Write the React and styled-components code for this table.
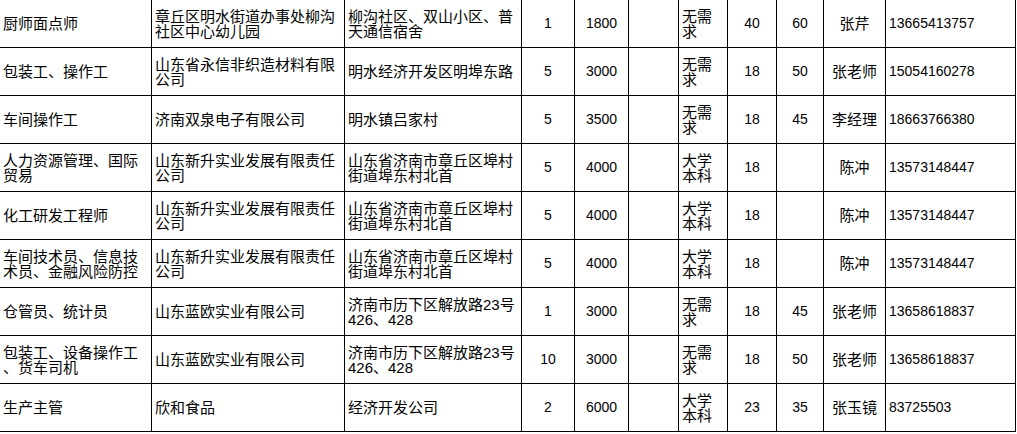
import React from 'react';
import styled, { createGlobalStyle } from 'styled-components';

const GlobalStyle = createGlobalStyle`
  html, body {
    margin: 0;
    padding: 0;
    background: #fff;
    overflow: hidden;
  }
`;

const Sheet = styled.table`
  border-collapse: collapse;
  table-layout: fixed;
  width: 1016px;
  margin: -1px 0 0 -1px;
  font-family: "Liberation Sans", "Noto Sans CJK SC", sans-serif;
  font-size: 15px;
  line-height: 15px;
  color: #000;
`;

const Row = styled.tr`
  height: 48px;
`;

const Cell = styled.td`
  border: 1px solid #000;
  padding: 0 3px;
  vertical-align: middle;
  text-align: ${p => p.$align || 'left'};
  font-size: ${p => (p.$num ? '14px' : '15px')};
  word-break: break-all;
  line-break: anywhere;
  overflow: hidden;
`;

const widths = [152, 193, 177, 53, 54, 50, 49, 49, 47, 62, 130];

const rows = [
  ['厨师面点师', '章丘区明水街道办事处柳沟社区中心幼儿园', '柳沟社区、双山小区、普天通信宿舍', '1', '1800', '', '无需求', '40', '60', '张芹', '13665413757'],
  ['包装工、操作工', '山东省永信非织造材料有限公司', '明水经济开发区明埠东路', '5', '3000', '', '无需求', '18', '50', '张老师', '15054160278'],
  ['车间操作工', '济南双泉电子有限公司', '明水镇吕家村', '5', '3500', '', '无需求', '18', '45', '李经理', '18663766380'],
  ['人力资源管理、国际贸易', '山东新升实业发展有限责任公司', '山东省济南市章丘区埠村街道埠东村北首', '5', '4000', '', '大学本科', '18', '', '陈冲', '13573148447'],
  ['化工研发工程师', '山东新升实业发展有限责任公司', '山东省济南市章丘区埠村街道埠东村北首', '5', '4000', '', '大学本科', '18', '', '陈冲', '13573148447'],
  ['车间技术员、信息技术员、金融风险防控', '山东新升实业发展有限责任公司', '山东省济南市章丘区埠村街道埠东村北首', '5', '4000', '', '大学本科', '18', '', '陈冲', '13573148447'],
  ['仓管员、统计员', '山东蓝欧实业有限公司', '济南市历下区解放路23号426、428', '1', '3000', '', '无需求', '18', '45', '张老师', '13658618837'],
  ['包装工、设备操作工、货车司机', '山东蓝欧实业有限公司', '济南市历下区解放路23号426、428', '10', '3000', '', '无需求', '18', '50', '张老师', '13658618837'],
  ['生产主管', '欣和食品', '经济开发公司', '2', '6000', '', '大学本科', '23', '35', '张玉镜', '83725503'],
];

const layout = [
  { align: 'left' },
  { align: 'left' },
  { align: 'left' },
  { align: 'center', num: true },
  { align: 'center', num: true },
  { align: 'center' },
  { align: 'left' },
  { align: 'center', num: true },
  { align: 'center', num: true },
  { align: 'center' },
  { align: 'left', num: true },
];

export default function App() {
  return (
    <>
      <GlobalStyle />
      <Sheet>
        <colgroup>
          {widths.map((w, i) => (
            <col key={i} style={{ width: w }} />
          ))}
        </colgroup>
        <tbody>
          {rows.map((r, i) => (
            <Row key={i}>
              {r.map((v, j) => (
                <Cell key={j} $align={layout[j].align} $num={layout[j].num}>
                  {v}
                </Cell>
              ))}
            </Row>
          ))}
        </tbody>
      </Sheet>
    </>
  );
}
